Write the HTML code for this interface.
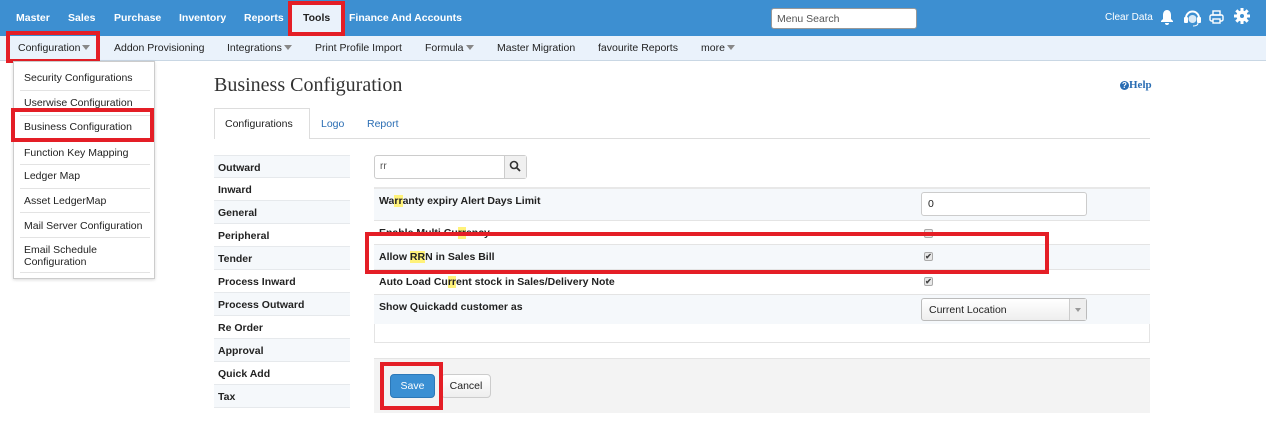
<!DOCTYPE html>
<html><head><style>
*{box-sizing:border-box;margin:0;padding:0}
body{width:1266px;height:427px;background:#fff;font-family:"Liberation Sans",Arial,sans-serif;font-size:11px;color:#222;position:relative;overflow:hidden}
.a{position:absolute;white-space:nowrap}
.top{left:0;top:0;width:1266px;height:36px;background:#3d8fd1}
.top .a{color:#fff;font-weight:bold;top:12px;font-size:10.5px}
.sub{left:0;top:36px;width:1266px;height:25px;background:#eaf2fb;border-bottom:1px solid #c9d7e4}
.sub .a{top:6px;color:#222;font-size:10.5px}
.car{display:inline-block;border-left:4px solid transparent;border-right:4px solid transparent;border-top:5px solid #888;margin-left:2px;vertical-align:1px}
.red{position:absolute;border:4px solid #e41e26}
.dd{left:13px;top:61px;width:142px;height:218px;border:1px solid #ccc;background:#fff;box-shadow:0 1px 3px rgba(0,0,0,.15)}
.dd div{position:absolute;left:10px;width:120px;font-size:10.5px}
.dd hr{position:absolute;left:6px;width:130px;border:0;border-top:1px solid #e3e3e3}
.lst{left:214px;width:136px;height:23px;background:#f5f8fb;border-bottom:1px solid #e6e9ec;font-weight:bold;padding:6px 4px;font-size:10.5px}
.row{left:374px;width:776px;border-top:1px solid #e4e4e4;font-weight:bold;padding:6px 5px;font-size:10.5px}
.hl{background:#fff27a}
.cb{position:absolute;left:550px;width:9px;height:9px;border:1px solid #aaa;border-radius:2px;background:#e8e8e8;font-size:8px;line-height:7px;text-align:center;color:#444}
</style></head><body>
<div class="a top">
<span class="a" style="left:16px">Master</span>
<span class="a" style="left:68px">Sales</span>
<span class="a" style="left:114px">Purchase</span>
<span class="a" style="left:179px">Inventory</span>
<span class="a" style="left:244px">Reports</span>
<div class="a" style="left:291px;top:2px;width:50px;height:33px;background:#eaf2fb"></div>
<span class="a" style="left:303px;color:#222">Tools</span>
<span class="a" style="left:349px">Finance And Accounts</span>
<div class="a" style="left:771px;top:8px;width:146px;height:21px;background:#fff;border:1px solid #999;border-radius:3px;padding:4px 5px;color:#555;font-weight:normal;font-size:10.5px">Menu Search</div>
<span class="a" style="left:1105px;font-weight:normal;font-size:10px">Clear Data</span>
<svg class="a" style="left:1160px;top:9px" width="14" height="16" viewBox="0 0 14 16"><path d="M7 1C4 1 3 4 3 6v4L1 12v1h12v-1l-2-2V6c0-2-1-5-4-5zM5 14h4a2 2 0 0 1-4 0z" fill="#fff"/></svg>
<svg class="a" style="left:1183px;top:8px" width="19" height="19" viewBox="0 0 19 19"><path d="M3 10a6.5 6.5 0 0 1 13 0" stroke="#fff" stroke-width="2" fill="none"/><rect x="1" y="9" width="4" height="6" rx="1" fill="#fff"/><rect x="14" y="9" width="4" height="6" rx="1" fill="#fff"/><circle cx="9.5" cy="11" r="4" fill="#fff" opacity=".8"/><path d="M15 15q0 3-5 3" stroke="#fff" fill="none"/></svg>
<svg class="a" style="left:1209px;top:10px" width="15" height="14" viewBox="0 0 15 14"><rect x="4" y="1" width="7" height="4" fill="none" stroke="#fff" stroke-width="1.4"/><rect x="1" y="5" width="13" height="6" rx="1.5" fill="none" stroke="#fff" stroke-width="1.4"/><rect x="4" y="9" width="7" height="4" fill="#3d8fd1" stroke="#fff" stroke-width="1.4"/></svg>
<svg class="a" style="left:1234px;top:8px" width="16" height="16" viewBox="0 0 16 16"><circle cx="8" cy="8" r="5.5" fill="#fff"/><g stroke="#fff" stroke-width="3"><path d="M8 0v16M0 8h16M2.3 2.3l11.4 11.4M13.7 2.3 2.3 13.7"/></g><circle cx="8" cy="8" r="2" fill="#3d8fd1"/></svg>
</div>
<div class="red" style="left:288px;top:1px;width:57px;height:35px"></div>
<div class="a sub">
<span class="a" style="left:18px">Configuration<span class="car"></span></span>
<span class="a" style="left:114px">Addon Provisioning</span>
<span class="a" style="left:227px">Integrations<span class="car"></span></span>
<span class="a" style="left:315px">Print Profile Import</span>
<span class="a" style="left:425px">Formula<span class="car"></span></span>
<span class="a" style="left:497px">Master Migration</span>
<span class="a" style="left:598px">favourite Reports</span>
<span class="a" style="left:701px">more<span class="car"></span></span>
</div>
<div class="red" style="left:6px;top:31px;width:94px;height:32px"></div>
<div class="a dd">
<div style="top:10px">Security Configurations</div><hr style="top:28px">
<div style="top:35px">Userwise Configuration</div><hr style="top:53px">
<div style="top:59px">Business Configuration</div><hr style="top:77px">
<div style="top:85px">Function Key Mapping</div><hr style="top:102px">
<div style="top:108px">Ledger Map</div><hr style="top:126px">
<div style="top:133px">Asset LedgerMap</div><hr style="top:150px">
<div style="top:158px">Mail Server Configuration</div><hr style="top:175px">
<div style="top:182px;white-space:normal;line-height:12px">Email Schedule Configuration</div><hr style="top:210px">
</div>
<div class="red" style="left:11px;top:108px;width:143px;height:34px"></div>
<div class="a" style="left:214px;top:74px;font-family:'Liberation Serif',serif;font-size:20px;color:#333">Business Configuration</div>
<div class="a" style="left:1120px;top:79px;font-family:'Liberation Serif',serif;font-size:11px;color:#2a6db3;font-weight:bold"><span style="display:inline-block;width:9px;height:9px;border-radius:50%;background:#2a6db3;color:#fff;font-size:8px;line-height:9px;text-align:center;font-family:'Liberation Sans',sans-serif">?</span>Help</div>
<div class="a" style="left:214px;top:138px;width:936px;border-top:1px solid #ddd"></div>
<div class="a" style="left:214px;top:108px;width:96px;height:31px;background:#fff;border:1px solid #ddd;border-bottom:0;padding:9px 10px;font-size:10.5px">Configurations</div>
<span class="a" style="left:321px;top:118px;color:#2a6db3;font-size:10.5px">Logo</span>
<span class="a" style="left:367px;top:118px;color:#2a6db3;font-size:10.5px">Report</span>
<div class="a lst" style="top:155px;border-top:1px solid #e6e9ec">Outward</div>
<div class="a lst" style="top:178px;background:#fff">Inward</div>
<div class="a lst" style="top:201px">General</div>
<div class="a lst" style="top:224px;background:#fff">Peripheral</div>
<div class="a lst" style="top:247px">Tender</div>
<div class="a lst" style="top:270px;background:#fff">Process Inward</div>
<div class="a lst" style="top:293px">Process Outward</div>
<div class="a lst" style="top:316px;background:#fff">Re Order</div>
<div class="a lst" style="top:339px">Approval</div>
<div class="a lst" style="top:362px;background:#fff">Quick Add</div>
<div class="a lst" style="top:385px">Tax</div>
<div class="a" style="left:374px;top:155px;width:153px;height:24px;border:1px solid #ccc;border-radius:3px;background:#fff"></div>
<span class="a" style="left:380px;top:161px;color:#555;font-size:10px">rr</span>
<div class="a" style="left:504px;top:156px;width:22px;height:22px;background:#f0f0f0;border-left:1px solid #ccc"></div>
<svg class="a" style="left:509px;top:160px" width="12" height="12" viewBox="0 0 12 12"><circle cx="5" cy="5" r="3.5" stroke="#333" stroke-width="1.6" fill="none"/><path d="M7.5 7.5 11 11" stroke="#333" stroke-width="1.8"/></svg>
<div class="a" style="left:374px;top:187px;width:776px;height:156px;border:1px solid #e4e4e4;border-top:3px solid #e8e8e8"></div>
<div class="a row" style="top:189px;height:31px;background:#f5f8fb;border-top:0">Wa<span class="hl">rr</span>anty expiry Alert Days Limit</div>
<div class="a" style="left:921px;top:192px;width:166px;height:24px;border:1px solid #ccc;border-radius:3px;background:#fff;padding:5px 6px;font-size:10.5px">0</div>
<div class="a row" style="top:220px;height:25px;background:#fff">Enable Multi Cu<span class="hl">rr</span>ency<div class="cb" style="top:8px"></div></div>
<div class="a row" style="top:244px;height:25px;background:#f5f8fb">Allow <span class="hl">RR</span>N in Sales Bill<div class="cb" style="top:7px">✔</div></div>
<div class="a row" style="top:269px;height:25px;background:#fff">Auto Load Cu<span class="hl">rr</span>ent stock in Sales/Delivery Note<div class="cb" style="top:7px">✔</div></div>
<div class="a row" style="top:294px;height:30px;background:#f5f8fb">Show Quickadd customer as</div>
<div class="a" style="left:921px;top:298px;width:166px;height:23px;border:1px solid #bbb;border-radius:3px;background:linear-gradient(#fff,#eee);padding:5px 7px;font-size:10.5px">Current Location</div>
<div class="a" style="left:1069px;top:299px;width:17px;height:21px;border-left:1px solid #ccc;background:#eee"><span class="car" style="position:absolute;left:3px;top:9px;border-top-color:#999;border-width:4px 3px 0"></span></div>
<div class="red" style="left:365px;top:232px;width:684px;height:42px"></div>
<div class="a" style="left:374px;top:358px;width:776px;height:55px;background:#f3f3f3;border-top:1px solid #e4e4e4"></div>
<div class="a" style="left:390px;top:374px;width:45px;height:24px;background:#3a8fd3;border:1px solid #2c78b8;border-radius:4px;color:#fff;font-size:10.5px;text-align:center;line-height:22px">Save</div>
<div class="a" style="left:441px;top:374px;width:50px;height:24px;background:linear-gradient(#fff,#eee);border:1px solid #ccc;border-radius:4px;font-size:10.5px;text-align:center;line-height:22px">Cancel</div>
<div class="red" style="left:380px;top:362px;width:63px;height:48px"></div>
</body></html>
